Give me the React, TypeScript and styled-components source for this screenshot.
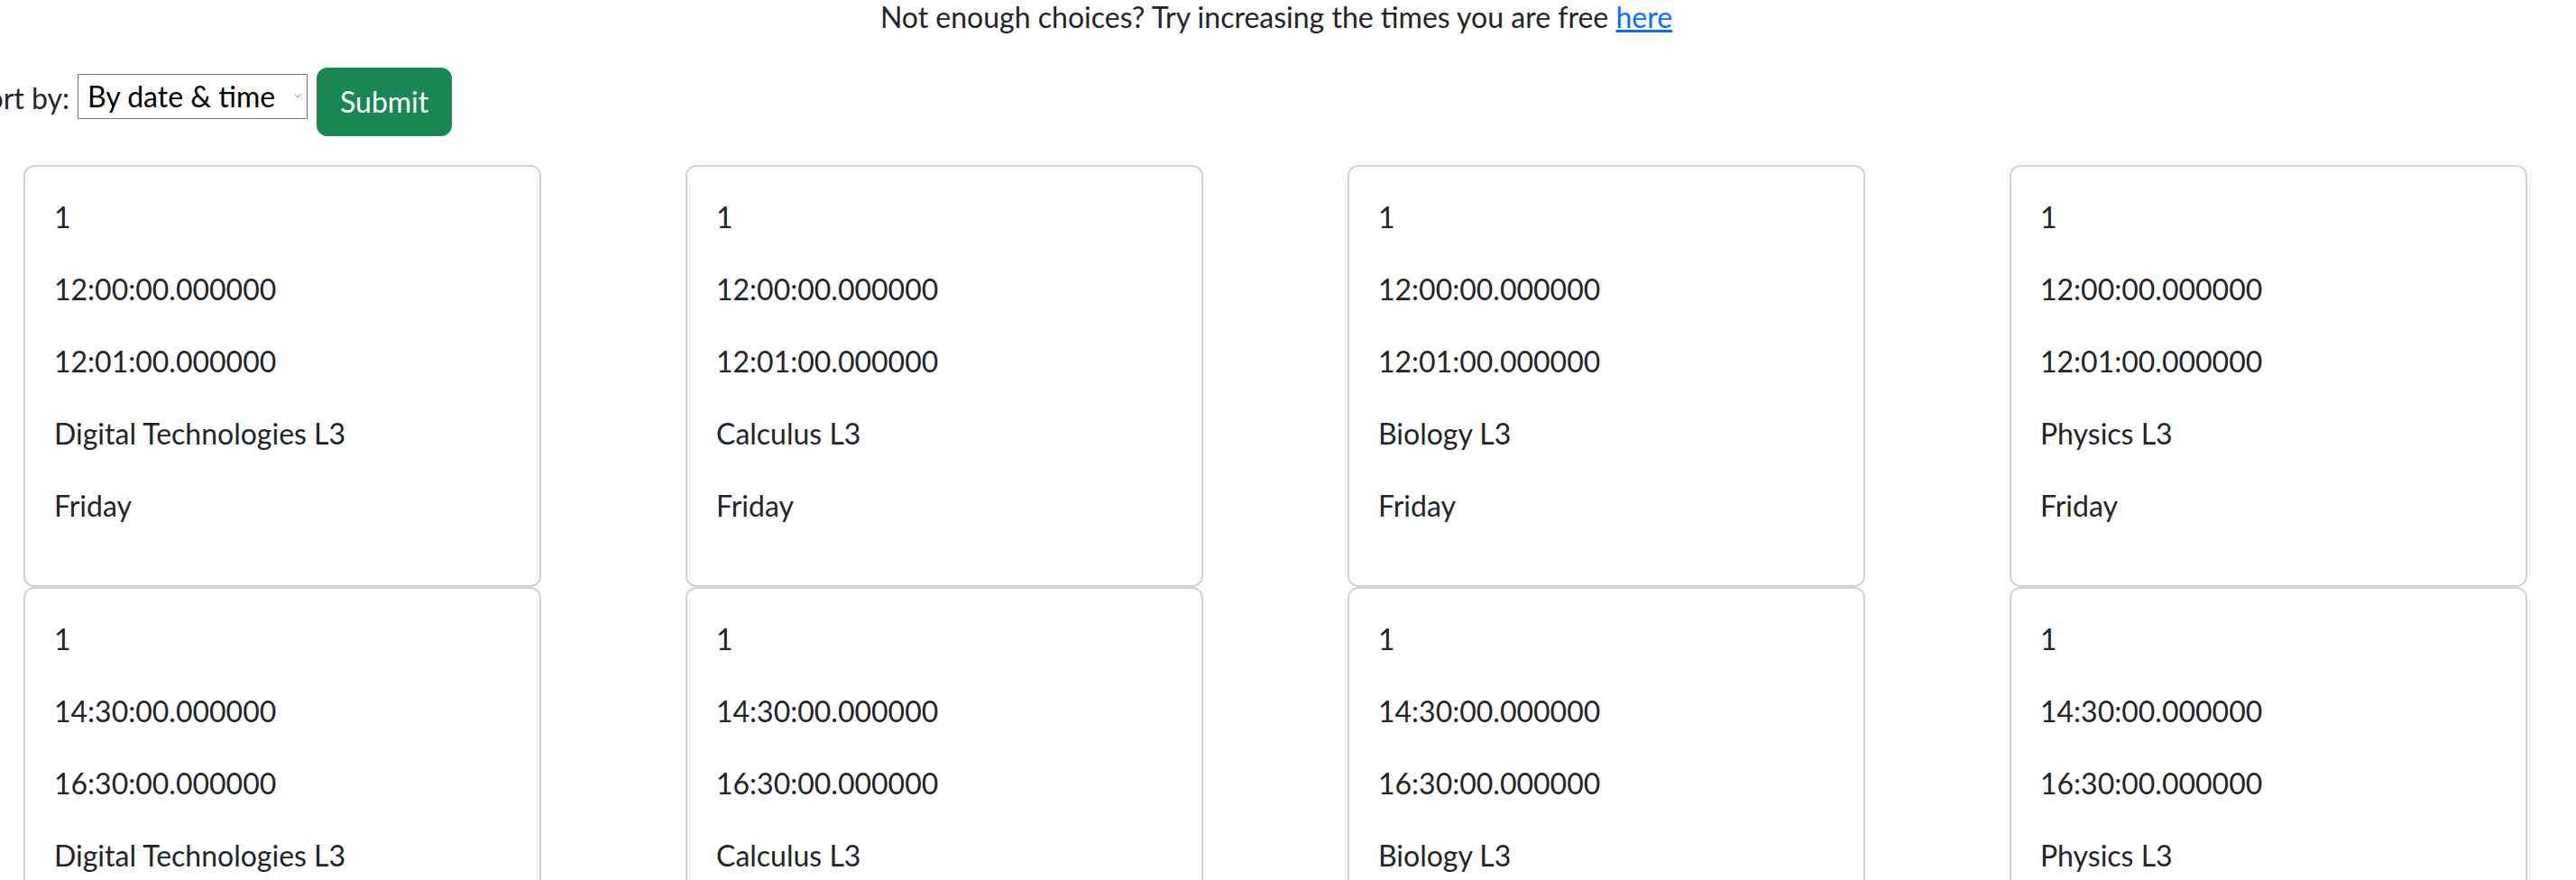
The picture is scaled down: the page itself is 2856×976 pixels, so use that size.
import React from "react";
import styled, { createGlobalStyle } from "styled-components";

const GlobalStyle = createGlobalStyle`
  html, body {
    margin: 0;
    padding: 0;
    background: #ffffff;
    overflow: hidden;
  }
  body {
    font-family: Lato, "Open Sans", "Noto Sans", sans-serif;
    color: #212529;
  }
`;

const Page = styled.div`
  width: 2896px;
  margin-left: -33px;
  margin-top: -5px;
  font-size: 32px;
  line-height: 48px;
`;

const Notice = styled.p`
  margin: 0 0 32px 0;
  text-align: center;
`;

const Link = styled.a`
  color: #0d6efd;
  text-decoration: underline;
`;

const SortForm = styled.form`
  display: flex;
  align-items: flex-start;
  padding-left: 16px;
  margin: 0 0 32px 0;
`;

const SortLabel = styled.label`
  display: flex;
  justify-content: flex-end;
  width: 94px;
  margin-top: 10px;
  white-space: nowrap;
`;

const SelectWrap = styled.div`
  position: relative;
  margin: 7px 0 0 9px;
`;

const Select = styled.select`
  appearance: none;
  box-sizing: border-box;
  width: 255px;
  height: 50px;
  padding: 0 30px 0 10px;
  border: 1px solid #767676;
  border-radius: 0;
  background: #ffffff;
  color: #000000;
  font-family: inherit;
  font-size: 32px;
  line-height: 48px;
`;

const Chevron = styled.svg`
  position: absolute;
  right: 7px;
  top: 22px;
  width: 8px;
  height: 5px;
  pointer-events: none;
`;

const SubmitButton = styled.button`
  box-sizing: border-box;
  height: 76px;
  margin-left: 10px;
  padding: 0 24px;
  border: 2px solid #198754;
  border-radius: 12px;
  background: #198754;
  color: #ffffff;
  font-family: inherit;
  font-size: 32px;
  line-height: 48px;
`;

const CardGrid = styled.div`
  display: grid;
  grid-template-columns: repeat(4, 574px);
  column-gap: 160px;
  row-gap: 0;
  padding-left: 59px;
`;

const Card = styled.div`
  box-sizing: border-box;
  border: 2px solid rgba(0, 0, 0, 0.175);
  border-radius: 12px;
  padding: 32px;
  background: #ffffff;
`;

const Line = styled.p`
  margin: 0 0 32px 0;
`;

const subjects = ["Digital Technologies L3", "Calculus L3", "Biology L3", "Physics L3"];

const slots = [
  { id: "1", start: "12:00:00.000000", end: "12:01:00.000000", day: "Friday" },
  { id: "1", start: "14:30:00.000000", end: "16:30:00.000000", day: "Friday" },
];

export default function App() {
  return (
    <>
      <GlobalStyle />
      <Page>
        <Notice>
          Not enough choices? Try increasing the times you are free <Link href="#">here</Link>
        </Notice>
        <SortForm onSubmit={(e) => e.preventDefault()}>
          <SortLabel htmlFor="sort">Sort by:</SortLabel>
          <SelectWrap>
            <Select id="sort" defaultValue="date">
              <option value="date">By date &amp; time</option>
              <option value="subject">By subject</option>
            </Select>
            <Chevron viewBox="0 0 8 5">
              <path d="M0.5 0.5 L4 4 L7.5 0.5" fill="none" stroke="#8a8a8a" strokeWidth="1" />
            </Chevron>
          </SelectWrap>
          <SubmitButton type="submit">Submit</SubmitButton>
        </SortForm>
        <CardGrid>
          {slots.map((slot, si) =>
            subjects.map((subject) => (
              <Card key={`${si}-${subject}`}>
                <Line>{slot.id}</Line>
                <Line>{slot.start}</Line>
                <Line>{slot.end}</Line>
                <Line>{subject}</Line>
                <Line>{slot.day}</Line>
              </Card>
            ))
          )}
        </CardGrid>
      </Page>
    </>
  );
}
